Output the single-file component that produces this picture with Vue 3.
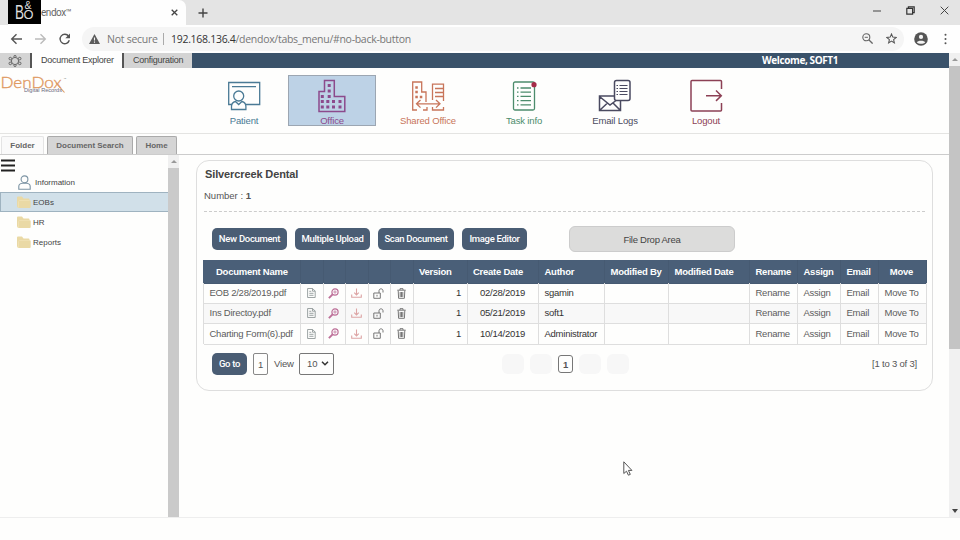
<script setup>
const ribbon = [
  { id: 'patient', label: 'Patient', color: '#4a7a95' },
  { id: 'office', label: 'Office', color: '#8c4a8c', active: true },
  { id: 'shared', label: 'Shared Office', color: '#c8755a' },
  { id: 'task', label: 'Task info', color: '#4c8c6c' },
  { id: 'email', label: 'Email Logs', color: '#4a4a60' },
  { id: 'logout', label: 'Logout', color: '#8c4055' },
]
const folders = [
  { name: 'EOBs', active: true },
  { name: 'HR' },
  { name: 'Reports' },
]
const actions = ['New Document', 'Multiple Upload', 'Scan Document', 'Image Editor']
const headers = [
  ['Document Name', 'h-name'], ['', ''], ['', ''], ['', ''], ['', ''], ['', ''],
  ['Version', 'h-version'], ['Create Date', 'h-date'], ['Author', ''], ['Modified By', ''], ['Modified Date', ''],
  ['Rename', ''], ['Assign', ''], ['Email', ''], ['Move', 'center'],
]
const rows = [
  { name: 'EOB 2/28/2019.pdf', date: '02/28/2019', author: 'sgamin' },
  { name: 'Ins Directoy.pdf', date: '05/21/2019', author: 'soft1' },
  { name: 'Charting Form(6).pdf', date: '10/14/2019', author: 'Administrator' },
]
</script>

<template>
  <div class="window">
    <header class="tabstrip">
      <div class="tab">
        <svg class="brand" width="33" height="24" viewBox="0 0 33 24">
          <rect width="33" height="24" fill="#000" />
          <text x="7" y="18.500" font-size="20" textLength="9" lengthAdjust="spacingAndGlyphs">B</text>
          <text x="16.500" y="8.800" font-size="10" textLength="7" lengthAdjust="spacingAndGlyphs">&amp;</text>
          <text x="15.500" y="18.500" font-size="12.500" textLength="10" lengthAdjust="spacingAndGlyphs">O</text>
        </svg>
        <span class="tab-title">endox™</span>
        <svg class="tab-close" width="7" height="7" viewBox="0 0 7 7"><path d="M.7.7l5.6 5.6M6.300.7L.7 6.300" stroke="#444" stroke-width="1.3" /></svg>
      </div>
      <svg class="new-tab" width="10" height="10" viewBox="0 0 10 10"><path d="M5 .5v9M.5 5h9" stroke="#444" stroke-width="1.4" /></svg>
      <div class="win-buttons">
        <svg width="8" height="10" viewBox="0 0 8 10"><path d="M0 5h8" stroke="#444" /></svg>
        <svg width="9" height="9" viewBox="0 0 9 9" fill="none" stroke="#333"><path d="M.8 2.300h5.800v5.800H.8z" stroke-width="1.2" /><path d="M2.400 2V.8h5.800v5.800H7" stroke-width="1.2" /></svg>
        <svg width="9" height="9" viewBox="0 0 9 9"><path d="M.7.7l7.600 7.600M8.300.7L.7 8.300" stroke="#444" /></svg>
      </div>
    </header>

    <div class="toolbar">
      <svg class="nav" width="62" height="14" viewBox="0 0 62 14" fill="none" stroke-width="1.4">
        <path d="M12 7H2M6.500 2.200L1.700 7l4.800 4.800" stroke="#555" />
        <path d="M25 7h10M30.500 2.200L35.300 7l-4.800 4.800" stroke="#bbb" />
        <path d="M58.600 4.200A4.700 4.700 0 1 0 59.300 8.300" stroke="#555" />
        <path d="M60 1.500v4.700h-4.700z" fill="#555" />
      </svg>
      <div class="omnibox">
        <svg width="11" height="10" viewBox="0 0 11 10"><path d="M5.500 0L11 10H0z" fill="#5c5c5c" /><path d="M5.500 3.500v3M5.500 7.500v1.200" stroke="#f5f5f5" stroke-width="1.100" /></svg>
        <span class="secure">Not secure</span>
        <span class="sep"></span>
        <span class="url"><b>192.168.136.4</b>/dendox/tabs_menu/#no-back-button</span>
        <svg class="zoom" width="11" height="11" viewBox="0 0 11 11" fill="none" stroke="#666"><circle cx="4.300" cy="4.300" r="3.500" stroke-width="1.100" /><path d="M2.700 4.300h3.200" /><path d="M7 7l3.600 3.600" stroke-width="1.300" /></svg>
        <svg class="star" width="11" height="11" viewBox="0 0 11 11"><path d="M5.500 1l1.300 3.100 3.400.3-2.600 2.200.8 3.300-2.900-1.800-2.900 1.800.8-3.300L.8 4.400l3.400-.3z" fill="none" stroke="#555" stroke-width="1.050" /></svg>
      </div>
      <svg class="avatar" width="14" height="14" viewBox="0 0 14 14"><circle cx="7" cy="7" r="6.800" fill="#555" /><circle cx="7" cy="4.900" r="2.100" fill="#f4f4f4" /><path d="M2.800 10.300C3.400 8.200 10.600 8.200 11.200 10.300 9.500 12.300 4.500 12.300 2.800 10.300z" fill="#f4f4f4" /></svg>
      <svg class="dots" width="3" height="12" viewBox="0 0 3 12" fill="#555"><circle cx="1.500" cy="1.700" r="1" /><circle cx="1.500" cy="6" r="1" /><circle cx="1.500" cy="10.300" r="1" /></svg>
    </div>

    <div class="viewport">
      <div class="page">
        <nav class="appbar">
          <div class="gear">
            <svg width="14" height="12" viewBox="0 0 14 12" fill="none" stroke="#666" stroke-width="1"><circle cx="7" cy="6" r="3.600" /><g fill="#d4d4d4"><circle cx="7" cy="1.500" r="1.100" /><circle cx="7" cy="10.500" r="1.100" /><circle cx="2.300" cy="3.600" r="1.300" /><circle cx="11.700" cy="3.600" r="1.300" /><circle cx="2.300" cy="8.400" r="1.300" /><circle cx="11.700" cy="8.400" r="1.300" /></g></svg>
          </div>
          <div class="apptab selected">Document Explorer</div>
          <div class="apptab">Configuration</div>
          <div class="welcome">Welcome, SOFT1</div>
        </nav>

        <div class="ribbon">
          <svg class="logo" width="67" height="20" viewBox="0 0 67 20">
            <text class="logo-name" x="0.500" y="11.500" font-size="15.500" fill="#e09a62" stroke="#e09a62" stroke-width=".35" textLength="61" lengthAdjust="spacingAndGlyphs">DenDox</text>
            <path d="M56 7l8.500 9.500" stroke="#e09a62" stroke-width="1.100" />
            <text x="24" y="16" font-size="5" fill="#69697c" textLength="38" lengthAdjust="spacingAndGlyphs">Digital Records</text>
            <text x="63.500" y="3.500" font-size="3" fill="#777">™</text>
          </svg>
          <div class="ribbon-items">
            <div v-for="r in ribbon" :key="r.id" class="ribbon-item" :class="[r.id, { active: r.active }]" :style="{ color: r.color }">
              <svg v-if="r.id === 'patient'" width="34" height="34" viewBox="0 0 34 34" fill="none" stroke="currentColor" stroke-width="1.300">
                <path d="M5 25.500H1.700V3.500h31v22H18.500M5 7.700h24" /><circle cx="11.700" cy="17" r="5" />
                <path d="M4.500 30.500v-3c0-3 2-4.500 4-5l3.200 3 3.200-3c2 .5 4 2 4 5v3z" />
              </svg>
              <svg v-else-if="r.id === 'office'" width="34" height="34" viewBox="0 0 34 34" fill="none" stroke="currentColor" stroke-width="1.500">
                <path d="M4 32.500V12.500h5.500v-11h9.800v16h10.500v15z" />
                <path d="M14.200 5v3M14.200 10.500v3M14.200 16v3M7.300 16v3M7.300 21v3M7.300 26.500v3M12.800 21v3M12.800 26.500v3M18.500 21v3M18.500 26.500v3M25 21v3M25 26.500v3" stroke-width="3" />
              </svg>
              <svg v-else-if="r.id === 'shared'" width="34" height="34" viewBox="0 0 34 34" fill="none" stroke="currentColor" stroke-width="1.300">
                <path d="M6 31H1.700V3h9v10H15v10M12 31h4v-3M21.500 21V5.200h11V22M21.500 28v3h11v-3M24 9.500h8M24 13.500h8M24 17.500h8" />
                <path d="M6 24.800h22M9.500 21l-4 3.800 4 3.800M25 21l4 3.800-4 3.800" /><path d="M5.500 8.500h.1M5.500 13h.1M5.500 18h.1M10 18h.1" stroke-width="2.400" stroke-linecap="square" />
              </svg>
              <svg v-else-if="r.id === 'task'" width="34" height="34" viewBox="0 0 34 34" fill="none" stroke="currentColor" stroke-width="1.300">
                <rect x="6.500" y="3" width="21" height="28" rx="1.500" /><path d="M13.500 9h10.500M13.500 13.200h10.500M13.500 17.400h10.500M13.500 21.600h10.500M13.500 25.800h10.500M10 9h1.500M10 13.200h1.500M10 17.400h1.500M10 21.600h1.500M10 25.800h1.500" />
                <circle cx="27" cy="5.700" r="2.600" fill="#a52b48" stroke="none" />
              </svg>
              <svg v-else-if="r.id === 'email'" width="34" height="34" viewBox="0 0 34 34" fill="none" stroke="currentColor" stroke-width="1.500">
                <path d="M16 17H1.500v14.500h21v-10M1.500 17.500L12 26l6-4.500M1.500 31.500l8-7.500M22.500 31.500L15 24" />
                <rect x="16.500" y="1.500" width="15.500" height="20" rx="2" /><path d="M21.500 6.500h8M21.500 9.500h8M21.500 12.500h8M21.500 15.500h8M18.500 6.500h1.500M18.500 9.500h1.500M18.500 12.500h1.500M18.500 15.500h1.500" stroke-width="1.200" />
              </svg>
              <svg v-else width="34" height="34" viewBox="0 0 34 34" fill="none" stroke="currentColor" stroke-width="1.500">
                <path d="M32.500 10V2.500q0-1-1-1H3q-1 0-1 1V31q0 1 1 1h28.500q1 0 1-1v-7" /><path d="M17 16.700h15M27 11.500l5.300 5.200-5.300 5.200" />
              </svg>
              <span>{{ r.label }}</span>
            </div>
          </div>
        </div>

        <div class="subtabs">
          <div class="subtab current">Folder</div>
          <div class="subtab search">Document Search</div>
          <div class="subtab home">Home</div>
        </div>

        <div class="body">
          <aside class="sidebar">
            <svg class="menu" width="14" height="13" viewBox="0 0 14 13"><path d="M0 1.500h14M0 6.500h14M0 11.500h14" stroke="#222" stroke-width="1.900" /></svg>
            <div class="info">
              <svg width="14" height="15" viewBox="0 0 14 15" fill="none" stroke="#7b93a3" stroke-width="1.100"><circle cx="6.500" cy="4.300" r="3.400" /><path d="M.8 14.200V11.500C.8 9.500 2.500 8.500 4.300 8.300h4.400c1.800.2 3.500 1.200 3.500 3.200v2.700z" /></svg>
              <span>Information</span>
            </div>
            <div v-for="f in folders" :key="f.name" class="folder" :class="{ active: f.active }">
              <svg width="14" height="13" viewBox="0 0 14 13"><path d="M0 1.500Q0 .5 1 .5h4l1.500 2h5q1 0 1 1v1h1.200v6.500q0 1-1 1H2q-2 0-2-2z" fill="#ead9a5" /><path d="M1.500 11.500V5.500q0-1 1-1h10" fill="none" stroke="#f0e3b8" stroke-width=".7" /></svg>
              <span>{{ f.name }}</span>
            </div>
          </aside>
          <div class="inner-scroll"><div class="arrow-box"><i class="up"></i></div></div>
          <main class="content">
            <section class="card">
              <h1>Silvercreek Dental</h1>
              <p class="number">Number : <b>1</b></p>
              <div class="rule"></div>
              <div class="actions">
                <button v-for="(a, i) in actions" :key="a" :class="'b' + i">{{ a }}</button>
                <div class="drop">File Drop Area</div>
              </div>
              <div class="table">
                <div class="tr head"><div v-for="(h, i) in headers" :key="i" :class="h[1]">{{ h[0] }}</div></div>
                <div v-for="r in rows" :key="r.name" class="tr">
                  <div class="soft">{{ r.name }}</div>
                  <div class="ic"><svg width="9" height="10" viewBox="0 0 9 10" fill="none" stroke="#929a9a" stroke-width=".9"><path d="M.6.5h5l2.600 2.600v6.400H.6zM5.500.5v2.700h2.700M2.300 3.300h2M2.300 5.300h4.200M2.300 7.300h4.200" /></svg></div>
                  <div class="ic"><svg width="11" height="11" viewBox="0 0 11 11" fill="none" stroke="#bd6f98"><circle cx="7" cy="4" r="3.100" stroke-width="1.200" /><circle cx="7" cy="4" r="1.100" stroke-width=".8" /><path d="M4.600 6.400L.9 10.100" stroke-width="2" /></svg></div>
                  <div class="ic"><svg width="11" height="10" viewBox="0 0 11 10" fill="none" stroke="#dda5a5" stroke-width="1.100"><path d="M5.500.5v6M3.200 4.600l2.300 2.300 2.300-2.300M.7 6.500v2.700h9.600V6.500" /></svg></div>
                  <div class="ic"><svg width="11" height="11" viewBox="0 0 11 11" fill="none" stroke="#777" stroke-width="1"><path d="M.8 5h6.500v5.300H.8zM6 5V2.800C6 .2 10 .2 10 2.800v1.700M4 6.800v1.700" /></svg></div>
                  <div class="ic"><svg width="9" height="11" viewBox="0 0 9 11" fill="none" stroke="#777" stroke-width="1"><path d="M.3 2.200h8.400M3 2V.7h3V2M1.200 2.500l.4 7.800h5.800l.4-7.800M3.200 4v5M4.500 4v5M5.800 4v5" /></svg></div>
                  <div class="right">1</div>
                  <div class="date">{{ r.date }}</div>
                  <div>{{ r.author }}</div>
                  <div></div><div></div>
                  <div class="soft">Rename</div><div class="soft">Assign</div><div class="soft">Email</div><div class="soft">Move To</div>
                </div>
              </div>
              <div class="pager">
                <button class="goto">Go to</button>
                <div class="page-input">1</div>
                <span class="view">View</span>
                <div class="select">10<svg width="8" height="5" viewBox="0 0 8 5"><path d="M1 .8l3 3 3-3" fill="none" stroke="#333" stroke-width="1.500" /></svg></div>
                <div class="pages"><i></i><i></i><b>1</b><i></i><i></i></div>
                <span class="range">[1 to 3 of 3]</span>
              </div>
            </section>
          </main>
        </div>
      </div>
      <div class="scrollbar">
        <div class="arrow-box"><i class="up"></i></div>
        <div class="thumb"></div>
        <div class="arrow-box bottom"><i class="down"></i></div>
      </div>
    </div>
    <svg class="cursor" width="10" height="16" viewBox="0 0 10 16"><path d="M.8.8v11.700l2.700-2.300 1.900 4 1.900-.8-1.900-4h3.500z" fill="#fff" stroke="#555" stroke-width="1" /></svg>
  </div>
</template>

<style>
body { margin: 0; background: #fefefd; }
</style>

<style scoped>
* { box-sizing: border-box; }
svg { display: block; flex: none; }
.window { position: relative; width: 960px; height: 540px; overflow: hidden; background: #fefefd; font-family: "Liberation Sans", Arial, sans-serif; font-size: 9px; color: #333; white-space: nowrap; }
.tabstrip { display: flex; height: 25px; background: #e4e4e4; padding-left: 8px; }
.tab { display: flex; width: 178px; background: #fefefe; border-radius: 0 7px 0 0; }
.brand { fill: #ddd; overflow: visible; }
.brand text { font-family: "Liberation Sans", sans-serif; }
.tab-title { width: 120px; padding-top: 6px; font: 10px/14px Roboto, sans-serif; color: #666; letter-spacing: -.45px; }
.tab-close { margin: 9px 0 0 10px; }
.new-tab { margin: 8px 0 0 12px; }
.win-buttons { display: flex; align-items: center; gap: 25px; margin-left: auto; padding: 0 11px 4px 0; }
.toolbar { display: flex; align-items: center; height: 28px; background: #fefefe; padding-bottom: 1px; }
.nav { margin-left: 10px; }
.omnibox { display: flex; align-items: center; width: 822px; height: 24px; margin-left: 10px; padding-left: 7px; border-radius: 12px; background: #f5f5f5; font: 10.500px/16px "Open Sans", sans-serif; color: #777; }
.secure { width: 51px; margin-left: 7px; letter-spacing: -.25px; }
.sep { width: 1px; height: 12px; margin-left: 5px; background: #aaa; }
.url { width: 245px; margin-left: 7px; letter-spacing: -.29px; }
.url b { font-weight: 400; color: #333; }
.zoom { margin-left: auto; position: relative; left: 6px; }
.star { margin: 0 12px 0 14px; position: relative; left: 5px; }
.avatar { margin-left: 10px; }
.dots { margin-left: 16px; }
.viewport { display: flex; height: 465px; border-bottom: 1px solid #eee; }
.page { display: flex; flex-direction: column; width: 949px; }
.appbar { display: flex; height: 15px; background: #3a526a; font-size: 9px; line-height: 15px; color: #444; }
.gear { display: grid; place-items: center; width: 30px; background: #d4d4d4; }
.apptab { width: 70px; padding-left: 9px; border-left: 2px solid #555; background: #d4d4d4; letter-spacing: -.25px; }
.apptab.selected { width: 92px; background: #fefefe; padding-left: 9px; }
.welcome { margin-left: auto; width: 187px; font: 700 10px/15px "Open Sans", sans-serif; color: #fff; letter-spacing: -.4px; }
.ribbon { display: flex; height: 66px; border-bottom: 1px solid #e4e4e2; }
.logo { margin-top: 8px; overflow: visible; }
.logo-name { font-family: Lato, sans-serif; font-weight: 300; }
.ribbon-items { display: flex; gap: 4px; padding: 7px 0 0 133px; }
.ribbon-item { display: flex; flex-direction: column; align-items: center; width: 88px; height: 51px; padding-top: 3px; border: 1px solid transparent; font-size: 9.500px; line-height: 12px; letter-spacing: -.15px; }
.ribbon-item span { margin-top: 1px; padding-top: 1px; }
.ribbon-item.active { margin-left: -4px; border-color: #9ca6b2; background: #bdd2e6; }
.ribbon-item.shared { margin-left: 4px; }
.ribbon-item.task { margin-left: 4px; }
.ribbon-item.email { margin-left: -1px; }
.ribbon-item.logout { margin-left: -1px; }
.subtabs { display: flex; align-items: flex-end; gap: 3px; height: 21px; padding-left: 1px; border-bottom: 1px solid #ccc; }
.subtab { height: 18px; border: 1px solid #aaa; border-bottom: 0; border-radius: 2px 2px 0 0; background: #d5d5d5; font-size: 8px; font-weight: 700; line-height: 17px; text-align: center; color: #666; }
.current { width: 43px; background: #fafafa; border-color: #e4e4e4; }
.search { width: 86px; letter-spacing: -.05px; }
.home { width: 41px; }
.body { display: flex; flex: 1; }
.sidebar { width: 168px; padding-top: 4px; font-size: 8px; color: #444; }
.menu { margin-left: 1px; }
.info { display: flex; align-items: center; height: 20px; padding-left: 18px; }
.info span { margin-left: 3px; }
.folder { display: flex; align-items: center; height: 20px; padding-left: 16px; border: 1px solid transparent; }
.folder span { margin-left: 2px; }
.folder.active { border: 1px solid #9fb3c0; border-right: 0; background: #d1e0e9; }
.inner-scroll { width: 11px; background: #cacaca; }
.arrow-box { display: grid; place-items: center; height: 13px; background: #f0f0f0; }
.up { border: 3px solid transparent; border-top: 0; border-bottom: 3px solid #999; }
.down { border: 3px solid transparent; border-bottom: 0; border-top: 4px solid #444; }
.content { flex: 1; padding: 5px 0 0 17px; }
.card { width: 737px; height: 231px; padding: 7px 7px 0; border: 1px solid #dedede; border-radius: 13px; }
h1 { margin: 0; padding-left: 1px; font-size: 11px; line-height: 12px; color: #444; letter-spacing: -.12px; }
.number { margin: 10px 0 0; font-size: 9.500px; line-height: 12px; letter-spacing: 0; color: #555; }
.rule { height: 1px; margin-top: 9px; width: 721px; border-top: 1px dashed #ccc; }
.actions { display: flex; height: 48px; padding: 15px 0 0 8px; }
button { height: 22px; margin: 0 8px 0 0; padding: 0; border: 0; border-radius: 5px; background: #4a5d74; color: #fff; font: 500 9.500px/22px Roboto, sans-serif; letter-spacing: -.3px; }
.actions button { margin-top: 1px; }
.b0 { width: 75px; } .b1 { width: 75px; } .b2 { width: 76px; } .b3 { width: 65px; }
.drop { width: 166px; height: 26px; margin-left: 34px; margin-top: -1px; border: 1px solid #ccc; border-radius: 6px; background: #dcdcdb; font-size: 9.500px; letter-spacing: -.25px; line-height: 26px; text-align: center; color: #444; }
.table { width: 724px; margin-left: -1px; font-size: 9.500px; letter-spacing: -.25px; }
.tr { display: grid; grid-template-columns: 97px 23px 22px 23px 22px 23px 54px 71px 66px 64px 81px 48px 43px 38px 48px; height: 20.300px; line-height: 20px; border-left: 1px solid #ddd; }
.tr > div { padding-left: 5.500px; border-right: 1px solid #dedede; border-bottom: 1px solid #dedede; }
.tr:nth-child(3) { background: #f8f8f8; }
.tr.head { height: 23px; line-height: 23px; background: #4a5f78; border-left-color: #4a5f78; color: #fff; font-weight: 700; }
.tr.head > div { border-color: #465a72; }
.tr .soft { color: #5c5c5c; }
.tr .ic { display: grid; place-items: center; padding: 0 2px 0 0; }
.tr .right { text-align: right; padding-right: 6px; }
.tr .date { padding-left: 12px; }
.tr .center { padding: 0 2px 0 0; text-align: center; }
.tr .h-name { padding-left: 12px; }
.tr .h-version { padding-left: 5px; }
.tr .h-date { padding-left: 5px; }
.pager { display: flex; align-items: center; height: 24px; margin-top: 8px; padding-left: 8px; font-size: 9.500px; letter-spacing: -.15px; color: #555; }
.goto { width: 35px; margin-right: 6px; }
.page-input { width: 15px; height: 22px; border: 1px solid #888; border-radius: 2px; line-height: 21px; text-align: center; }
.view { width: 25px; margin-left: 6px; }
.select { display: flex; align-items: center; justify-content: space-between; width: 35px; height: 22px; padding: 0 4px 0 7px; border: 1px solid #777; border-radius: 2px; }
.pages { display: flex; align-items: center; gap: 6px; margin-left: 168px; }
.pages i { width: 22px; height: 20px; border-radius: 6px; background: #f7f7f7; }
.pages b { width: 15px; height: 18px; border: 1px solid #777; border-radius: 3px; line-height: 17px; text-align: center; }
.range { margin-left: auto; padding-right: 8px; letter-spacing: -.2px; }
.scrollbar { display: flex; flex-direction: column; width: 11px; background: #f1f1f1; }
.thumb { height: 283px; background: #c4c4c4; }
.bottom { margin-top: auto; }
.cursor { position: absolute; left: 623px; top: 461px; }
</style>
